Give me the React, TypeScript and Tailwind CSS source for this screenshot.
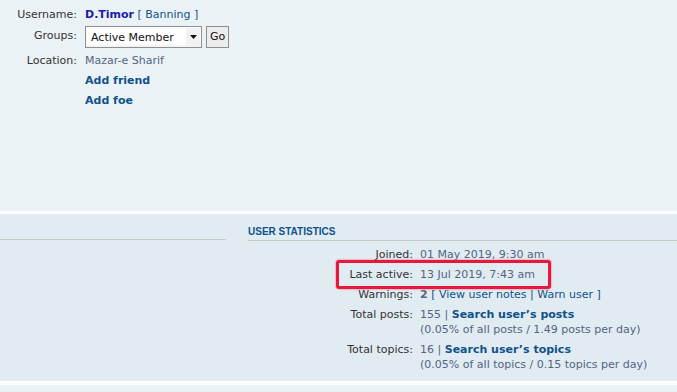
export default function App() {
  return (
    <div className="h-[392px] w-[677px] overflow-hidden bg-white text-[11px] leading-[14px] text-[#333] [font-family:'DejaVu_Sans',Verdana,sans-serif]">
      {/* Profile panel */}
      <div className="h-[211px] bg-[#ebf2f5] pt-[5px]">
        <div className="grid grid-cols-[77px_1fr] gap-x-[8px]">
          <div className="py-[3px] text-right">Username:</div>
          <div className="py-[3px]">
            <span className="font-bold text-[#1d1da8]">D.Timor</span>{" "}
            <span className="text-[#105289]">[ Banning ]</span>
          </div>

          <div className="pt-[4px] text-right">Groups:</div>
          <div className="flex items-center gap-[4px] pt-[1px] pb-[3px]">
            <div className="flex h-[22px] w-[117px] items-center justify-between border border-[#8f8f8f] bg-white pl-[5px] pr-[1px] text-[#111] shadow-[inset_0_-2px_3px_rgba(0,0,0,0.06)]">
              <span className="pt-[2px]">Active Member</span>
              <span className="flex h-[18px] w-[14px] items-center justify-center bg-[#f2f2f2]">
                <svg width="7" height="4" viewBox="0 0 7 4">
                  <path d="M0 0h7L3.5 4z" fill="#111" />
                </svg>
              </span>
            </div>
            <div className="flex h-[22px] items-center border border-[#8f8f8f] bg-[#ececec] px-[3px] text-[#111]">
              Go
            </div>
          </div>

          <div className="py-[3px] text-right">Location:</div>
          <div className="py-[3px] text-[#536482]">Mazar-e Sharif</div>

          <div />
          <div className="py-[3px] font-bold text-[#105289]">Add friend</div>

          <div />
          <div className="py-[3px] font-bold text-[#105289]">Add foe</div>
        </div>
      </div>

      {/* Statistics panel */}
      <div className="mt-[3px] flex h-[167px] bg-[#e1ebf2]">
        <div className="w-[226px] pt-[25px]">
          <div className="border-t border-[#c9c9c9]" />
        </div>
        <div className="ml-[22px] flex-1">
          <div className="border-b border-[#c9c9c9] pt-[12px] pb-[2px] text-[10px] font-bold leading-[12px] text-[#105289] [font-family:'Liberation_Sans',Arial,sans-serif]">
            USER STATISTICS
          </div>
          <div className="mt-[4px] grid grid-cols-[165px_1fr] gap-x-[7px]">
            <div className="py-[3px] text-right">Joined:</div>
            <div className="py-[3px] text-[#536482]">01 May 2019, 9:30 am</div>

            <div className="py-[3px] text-right">Last active:</div>
            <div className="relative py-[3px] text-[#536482]">
              13 Jul 2019, 7:43 am
              <div className="absolute top-[-5px] left-[-84px] h-[29px] w-[215px] rounded-[3px] border-[3px] border-[#e8173c] shadow-[0_0_2px_#ff4060]" />
            </div>

            <div className="py-[3px] text-right">Warnings:</div>
            <div className="py-[3px] text-[#105289]">
              <span className="font-bold text-[#536482]">2</span> [ View user notes | Warn user ]
            </div>

            <div className="pt-[3px] text-right">Total posts:</div>
            <div className="pt-[3px] text-[#536482]">
              155 | <span className="font-bold text-[#105289]">Search user’s posts</span>
              <div className="pt-[1px]">(0.05% of all posts / 1.49 posts per day)</div>
            </div>

            <div className="pt-[6px] text-right">Total topics:</div>
            <div className="pt-[6px] text-[#536482]">
              16 | <span className="font-bold text-[#105289]">Search user’s topics</span>
              <div className="pt-[1px]">(0.05% of all topics / 0.15 topics per day)</div>
            </div>
          </div>
        </div>
      </div>

      <div className="mt-[4px] h-[20px] bg-[#ebf2f5]" />
    </div>
  );
}
